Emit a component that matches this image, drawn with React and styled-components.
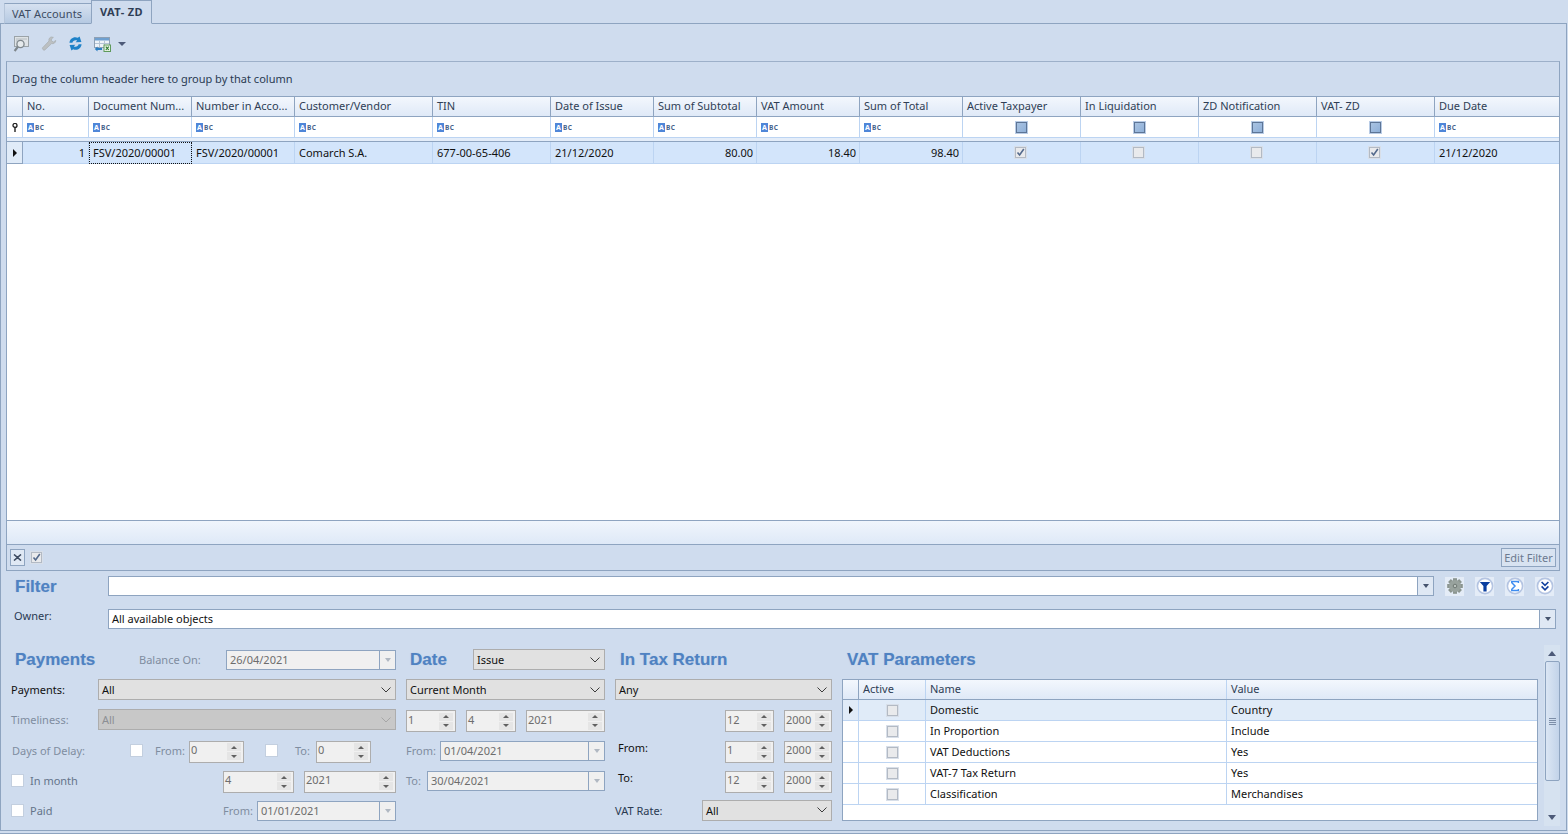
import React from "react";
import styled, { createGlobalStyle } from "styled-components";

const columns = [
  { title: "No.", width: 66 },
  { title: "Document Num...", width: 103 },
  { title: "Number in Acco...", width: 103 },
  { title: "Customer/Vendor", width: 138 },
  { title: "TIN", width: 118 },
  { title: "Date of Issue", width: 103 },
  { title: "Sum of Subtotal", width: 103 },
  { title: "VAT Amount", width: 103 },
  { title: "Sum of Total", width: 103 },
  { title: "Active Taxpayer", width: 118, check: true },
  { title: "In Liquidation", width: 118, check: true },
  { title: "ZD Notification", width: 118, check: true },
  { title: "VAT- ZD", width: 118, check: true },
  { title: "Due Date", width: 125 },
];

const row = [
  { text: "1", right: true },
  { text: "FSV/2020/00001", focus: true },
  { text: "FSV/2020/00001" },
  { text: "Comarch S.A." },
  { text: "677-00-65-406" },
  { text: "21/12/2020" },
  { text: "80.00", right: true },
  { text: "18.40", right: true },
  { text: "98.40", right: true },
  { check: true },
  { check: false },
  { check: false },
  { check: true },
  { text: "21/12/2020" },
];

const vatRows = [
  ["Domestic", "Country"],
  ["In Proportion", "Include"],
  ["VAT Deductions", "Yes"],
  ["VAT-7 Tax Return", "Yes"],
  ["Classification", "Merchandises"],
];

export default function App() {
  return (
    <Page>
      <GlobalStyle />
      <Tabs>
        <Tab>VAT Accounts</Tab>
        <Tab $active>VAT- ZD</Tab>
      </Tabs>
      <Panel>
        <Toolbar>
          <ToolIcon><PreviewIcon /></ToolIcon>
          <ToolIcon><WrenchIcon /></ToolIcon>
          <ToolIcon $width={26}><RefreshIcon /></ToolIcon>
          <ToolIcon $width={23}><ExportIcon /></ToolIcon>
          <Caret />
        </Toolbar>

        <GridBox>
          <GroupBar>Drag the column header here to group by that column</GroupBar>
          <GridRow $height={20}>
            <IndicatorCell $header />
            {columns.map((c) => (
              <HeadCell key={c.title} $width={c.width}>{c.title}</HeadCell>
            ))}
          </GridRow>
          <GridRow $height={21} $white>
            <IndicatorCell $filter><KeyIcon /></IndicatorCell>
            {columns.map((c) => (
              <FilterCell key={c.title} $width={c.width} $center={c.check}>
                {c.check ? <FilterCheck /> : <AbcIcon />}
              </FilterCell>
            ))}
          </GridRow>
          <RowGap />
          <DataRow>
            <IndicatorCell $row><RowArrow /></IndicatorCell>
            {row.map((cell, i) => (
              <DataCell
                key={i}
                $width={columns[i].width}
                $right={cell.right}
                $focus={cell.focus}
                $center={cell.check !== undefined}
              >
                {cell.check !== undefined ? <GridCheck $on={cell.check} /> : cell.text}
              </DataCell>
            ))}
          </DataRow>
          <GridBody />
          <SummaryStrip />
          <FilterStrip>
            <CloseBox>
              <svg width="9" height="7" viewBox="0 0 9 7">
                <path d="M1 0.5 L4.5 3.5 L1 6.5 M8 0.5 L4.5 3.5 L8 6.5" fill="none" stroke="#3d4a60" strokeWidth="1.6" />
              </svg>
            </CloseBox>
            <GridCheck $on $strip />
            <EditFilter>Edit Filter</EditFilter>
          </FilterStrip>
        </GridBox>

        <FilterSection>
          <FilterLine>
            <FilterHeading>Filter</FilterHeading>
            <TextField>
              <FieldButton />
            </TextField>
            <RoundIcons>
              <IconTile><GearIcon /></IconTile>
              <IconTile><FunnelIcon /></IconTile>
              <IconTile><SigmaIcon /></IconTile>
              <IconTile><ChevronsIcon /></IconTile>
            </RoundIcons>
          </FilterLine>
          <OwnerLine>
            <OwnerLabel>Owner:</OwnerLabel>
            <TextField>
              <FieldText>All available objects</FieldText>
              <FieldButton />
            </TextField>
          </OwnerLine>
        </FilterSection>

        <Form>
          <PaymentsColumn>
            <FormRow>
              <Heading $width={128}>Payments</Heading>
              <Label $width={87} $muted>Balance On:</Label>
              <DateField $width={170} value="26/04/2021" />
            </FormRow>
            <FormRow>
              <Label $width={87} $dark>Payments:</Label>
              <Select $grow>All</Select>
            </FormRow>
            <FormRow>
              <Label $width={87} $muted>Timeliness:</Label>
              <Select $grow $disabled>All</Select>
            </FormRow>
            <FormRow>
              <Label $width={119} $muted $pad={1}>Days of Delay:</Label>
              <CheckBox />
              <Label $width={46} $muted $pad={12}>From:</Label>
              <Spin $width={55} value="0" />
              <Spacer $width={21} />
              <CheckBox />
              <Label $width={38} $muted $pad={17}>To:</Label>
              <Spin $width={55} value="0" />
            </FormRow>
            <FormRow>
              <CheckBox />
              <Label $width={199} $soft $pad={6}>In month</Label>
              <Spin $width={71} value="4" />
              <Spacer $width={10} />
              <Spin $width={92} value="2021" />
            </FormRow>
            <FormRow>
              <CheckBox />
              <Label $width={199} $soft $pad={6}>Paid</Label>
              <Label $width={34} $muted>From:</Label>
              <DateField $width={139} value="01/01/2021" />
            </FormRow>
          </PaymentsColumn>

          <DateColumn>
            <FormRow>
              <Heading $width={67} $pad={4}>Date</Heading>
              <Select $grow>Issue</Select>
            </FormRow>
            <FormRow>
              <Select $grow>Current Month</Select>
            </FormRow>
            <FormRow>
              <Spin $width={50} value="1" />
              <Spacer $width={10} />
              <Spin $width={50} value="4" />
              <Spacer $width={10} />
              <Spin $width={79} value="2021" />
            </FormRow>
            <FormRow>
              <Label $width={34} $muted>From:</Label>
              <DateField $width={165} value="01/04/2021" />
            </FormRow>
            <FormRow>
              <Label $width={21} $muted>To:</Label>
              <DateField $width={178} value="30/04/2021" />
            </FormRow>
          </DateColumn>

          <TaxColumn>
            <FormRow>
              <Heading $pad={5}>In Tax Return</Heading>
            </FormRow>
            <FormRow>
              <Select $grow>Any</Select>
            </FormRow>
            <FormRow>
              <Spacer $width={110} />
              <Spin $width={49} value="12" />
              <Spacer $width={10} />
              <Spin $width={48} value="2000" />
            </FormRow>
            <FormRow>
              <Label $width={110} $dark $pad={3} $raised>From:</Label>
              <Spin $width={49} value="1" />
              <Spacer $width={10} />
              <Spin $width={48} value="2000" />
            </FormRow>
            <FormRow>
              <Label $width={110} $dark $pad={3} $raised>To:</Label>
              <Spin $width={49} value="12" />
              <Spacer $width={10} />
              <Spin $width={48} value="2000" />
            </FormRow>
            <FormRow>
              <Label $width={87}>VAT Rate:</Label>
              <Select $grow>All</Select>
            </FormRow>
          </TaxColumn>

          <VatColumn>
            <FormRow>
              <Heading $pad={5}>VAT Parameters</Heading>
            </FormRow>
            <VatTable>
              <VatRow $head>
                <VatIndicator $head />
                <VatCell $width={67}>Active</VatCell>
                <VatCell $width={301}>Name</VatCell>
                <VatCell $grow>Value</VatCell>
              </VatRow>
              {vatRows.map(([name, value], i) => (
                <VatRow key={name} $selected={i === 0}>
                  <VatIndicator>{i === 0 && <RowArrow />}</VatIndicator>
                  <VatCell $width={67} $center><GridCheck /></VatCell>
                  <VatCell $width={301}>{name}</VatCell>
                  <VatCell $grow>{value}</VatCell>
                </VatRow>
              ))}
            </VatTable>
          </VatColumn>

          <ScrollBar>
            <ScrollUp />
            <ScrollThumb>
              <Grip />
            </ScrollThumb>
            <ScrollDown />
          </ScrollBar>
        </Form>
      </Panel>
    </Page>
  );
}

function Select({ children, $grow, $disabled }) {
  return (
    <SelectBox $grow={$grow} $disabled={$disabled}>
      <span>{children}</span>
      <svg width="10" height="6" viewBox="0 0 10 6">
        <path d="M0.5 0.5 L5 5 L9.5 0.5" fill="none" stroke={$disabled ? "#a6a6a6" : "#3c3c3c"} strokeWidth="1" />
      </svg>
    </SelectBox>
  );
}

function DateField({ $width, value }) {
  return (
    <DateBox $width={$width}>
      <DateValue>{value}</DateValue>
      <DateButton>
        <CaretSmall />
      </DateButton>
    </DateBox>
  );
}

function Spin({ $width, value }) {
  return (
    <SpinBox $width={$width}>
      <SpinValue>{value}</SpinValue>
      <SpinButtons>
        <SpinButton><SpinUp /></SpinButton>
        <SpinButton><SpinDown /></SpinButton>
      </SpinButtons>
    </SpinBox>
  );
}

function AbcIcon() {
  return (
    <Abc>
      <AbcA>A</AbcA>
      <AbcRest>BC</AbcRest>
    </Abc>
  );
}

function PreviewIcon() {
  return (
    <svg width="16" height="16" viewBox="0 0 16 16">
      <rect x="1.5" y="0.5" width="14" height="10" fill="#dfe3e6" stroke="#9ba3a8" />
      <path d="M3 3h11M3 5h4" stroke="#b5bcc0" />
      <circle cx="7.5" cy="8" r="3.6" fill="#e6eaec" stroke="#7f878c" strokeWidth="1.3" />
      <path d="M5 10.6 L1.6 15" stroke="#7f878c" strokeWidth="2.2" />
    </svg>
  );
}

function WrenchIcon() {
  return (
    <svg width="16" height="16" viewBox="0 0 16 16">
      <path d="M10.5 1 C8.6 1.2 7.4 3 8 5 L1.5 11.8 C0.8 12.8 2.6 14.8 3.8 14 L10.6 7.6 C12.8 8.2 14.8 6.6 14.8 4.4 L12.4 6 L10.4 4.8 L10.4 3 L12.4 1.4 Z" fill="#bcc0c2" stroke="#a2a7aa" strokeWidth="0.6" />
    </svg>
  );
}

function RefreshIcon() {
  return (
    <svg width="15" height="15" viewBox="0 0 15 15">
      <path d="M1.4 6.8 C1.8 2.6 6 0 9.8 1.8 L11.6 0.4 L13.4 6 L7.6 6.2 L9.2 4.6 C6.8 3.6 4.8 5 4.4 6.8 Z" fill="#1f82c8" />
      <path d="M13.6 8.2 C13.2 12.4 9 15 5.2 13.2 L3.4 14.6 L1.6 9 L7.4 8.8 L5.8 10.4 C8.2 11.4 10.2 10 10.6 8.2 Z" fill="#1f82c8" />
    </svg>
  );
}

function ExportIcon() {
  return (
    <svg width="17" height="16" viewBox="0 0 17 16">
      <rect x="0.5" y="1.5" width="15" height="10" fill="#eef3f8" stroke="#8ea0b4" />
      <rect x="1" y="2" width="14" height="2.5" fill="#6fa0d0" />
      <path d="M5.5 4.5v7M10.5 4.5v7M1 7.5h14" stroke="#b5c4d4" />
      <rect x="10" y="9" width="6.5" height="6.5" fill="#e8f3e4" stroke="#5f9a5b" />
      <path d="M11.8 10.6 L14.8 14 M14.8 10.6 L11.8 14" stroke="#2f7d32" strokeWidth="1.1" />
      <path d="M8 12 H3.5 V10.5 L0.8 13 L3.5 15.4 V14 H8 Z" fill="#2b7fc2" />
    </svg>
  );
}

function KeyIcon() {
  return (
    <svg width="6" height="9" viewBox="0 0 6 9">
      <circle cx="3" cy="2.4" r="2" fill="none" stroke="#222" strokeWidth="1.3" />
      <path d="M3 4v5" stroke="#222" strokeWidth="1.4" />
    </svg>
  );
}

function GearIcon() {
  const teeth = [0, 45, 90, 135];
  return (
    <svg width="16" height="16" viewBox="0 0 16 16">
      {teeth.map((a) => (
        <rect key={a} x="6" y="0.2" width="4" height="15.6" fill="#8b9590" transform={`rotate(${a} 8 8)`} />
      ))}
      <circle cx="8" cy="8" r="6" fill="#98a29d" />
      <circle cx="8" cy="8" r="1.8" fill="#b9c2bd" stroke="#6e7873" />
    </svg>
  );
}

function FunnelIcon() {
  return (
    <svg width="18" height="18" viewBox="0 0 18 18">
      <circle cx="9" cy="9" r="7.6" fill="#fff" stroke="#b4c4e2" strokeWidth="1.6" />
      <path d="M3.8 5 H14.2 L10.6 9 V14.6 H7.4 V9 Z" fill="#0b3f9f" />
    </svg>
  );
}

function SigmaIcon() {
  return (
    <svg width="18" height="18" viewBox="0 0 18 18">
      <circle cx="9" cy="9" r="7.6" fill="#fff" stroke="#b4c4e2" strokeWidth="1.6" />
      <path d="M12.4 6 V4.6 H5.8 V5.8 L9 9 L5.8 12.2 V13.4 H12.4 V12" fill="none" stroke="#3d8cf0" strokeWidth="1.5" />
    </svg>
  );
}

function ChevronsIcon() {
  return (
    <svg width="18" height="18" viewBox="0 0 18 18">
      <circle cx="9" cy="9" r="7.6" fill="#fff" stroke="#b4c4e2" strokeWidth="1.6" />
      <path d="M5.6 5 L9 8.4 L12.4 5 M5.6 9.4 L9 12.8 L12.4 9.4" fill="none" stroke="#12409e" strokeWidth="1.6" />
    </svg>
  );
}

const GlobalStyle = createGlobalStyle`
  html, body {
    margin: 0;
    height: 100%;
    overflow: hidden;
  }
  body {
    background: #cfdcee;
    font-family: "Noto Sans", "DejaVu Sans", sans-serif;
    font-size: 11px;
    color: #1b1b1b;
  }
`;

const Page = styled.div`
  width: 1568px;
  height: 834px;
  display: flex;
  flex-direction: column;
  box-sizing: border-box;
  padding-bottom: 2px;
  border-bottom: 1px solid #8ea4c0;
`;

const Tabs = styled.div`
  display: flex;
  align-items: flex-end;
  height: 24px;
  padding-left: 4px;
  margin-bottom: -1px;
  position: relative;
  z-index: 1;
`;

const Tab = styled.div`
  box-sizing: border-box;
  border: 1px solid #8ea4c0;
  border-bottom: ${(p) => (p.$active ? "1px solid #cfdcee" : "1px solid #8ea4c0")};
  border-left: ${(p) => (p.$active ? "1px solid #8ea4c0" : "1px solid #b5c5da")};
  border-right: ${(p) => (p.$active ? "1px solid #8ea4c0" : "0")};
  height: ${(p) => (p.$active ? "24px" : "21px")};
  width: ${(p) => (p.$active ? "61px" : "87px")};
  padding-left: ${(p) => (p.$active ? "8px" : "7px")};
  line-height: ${(p) => (p.$active ? "21px" : "19px")};
  letter-spacing: ${(p) => (p.$active ? "0.4px" : "0.15px")};
  font-weight: ${(p) => (p.$active ? 700 : 400)};
  color: ${(p) => (p.$active ? "#2f3e55" : "#3d4c63")};
  background: ${(p) => (p.$active ? "#cfdcee" : "linear-gradient(#d6e1f0, #b5c9e2)")};
  white-space: nowrap;
`;

const Panel = styled.div`
  flex: 1;
  min-height: 0;
  display: flex;
  flex-direction: column;
  box-sizing: border-box;
  border: 1px solid #8ea4c0;
  margin-right: 1px;
  padding: 0 5px;
`;

const Toolbar = styled.div`
  display: flex;
  align-items: center;
  box-sizing: border-box;
  height: 37px;
  flex: none;
  padding: 3px 0 0 7px;
`;

const ToolIcon = styled.div`
  width: ${(p) => p.$width ?? 27.5}px;
  height: 16px;
  display: flex;
`;

const Caret = styled.div`
  width: 0;
  height: 0;
  margin-left: 1px;
  border-left: 4px solid transparent;
  border-right: 4px solid transparent;
  border-top: 4px solid #4d5a78;
`;

const GridBox = styled.div`
  flex: 1;
  min-height: 0;
  display: flex;
  flex-direction: column;
  box-sizing: border-box;
  border: 1px solid #8ea4c0;
  border-top-color: #9db0c9;
  margin-right: 1px;
`;

const GroupBar = styled.div`
  height: 34px;
  flex: none;
  line-height: 33px;
  padding-left: 5px;
  color: #2a3a52;
  background: #cfdcee;
  border-bottom: 1px solid #8ea4c0;
`;

const GridRow = styled.div`
  display: flex;
  flex: none;
  height: ${(p) => p.$height}px;
  background: ${(p) => (p.$white ? "#fff" : "transparent")};
`;

const IndicatorCell = styled.div`
  width: 16px;
  flex: none;
  box-sizing: border-box;
  display: flex;
  align-items: center;
  justify-content: center;
  border-right: 1px solid ${(p) => (p.$filter ? "#bcd4f2" : "#8ea4c0")};
  border-bottom: 1px solid ${(p) => (p.$filter ? "#bcd4f2" : "#8ea4c0")};
  background: ${(p) =>
    p.$header ? "linear-gradient(#f3f7fd, #dfe9f7)" : p.$row ? "#e0ebf8" : "#fff"};
`;

const HeadCell = styled.div`
  width: ${(p) => p.$width}px;
  flex: none;
  box-sizing: border-box;
  padding-left: 4px;
  line-height: 18px;
  color: #2f3e55;
  white-space: nowrap;
  overflow: hidden;
  border-right: 1px solid #8ea4c0;
  border-bottom: 1px solid #8ea4c0;
  background: linear-gradient(#f3f7fd, #dfe9f7);
  &:last-child {
    flex: 1;
    border-right: 0;
  }
`;

const FilterCell = styled.div`
  width: ${(p) => p.$width}px;
  flex: none;
  box-sizing: border-box;
  display: flex;
  align-items: center;
  justify-content: ${(p) => (p.$center ? "center" : "flex-start")};
  padding: ${(p) => (p.$center ? "0 1px 0 0" : "0 0 0 4px")};
  border-right: 1px solid #bcd4f2;
  border-bottom: 1px solid #bcd4f2;
  &:last-child {
    flex: 1;
    border-right: 0;
  }
`;

const Abc = styled.span`
  display: inline-flex;
  align-items: center;
  gap: 1px;
  height: 9px;
`;

const AbcA = styled.span`
  width: 7px;
  height: 9px;
  background: #4f86d8;
  color: #fff;
  font-size: 7px;
  line-height: 9px;
  text-align: center;
  font-weight: 700;
`;

const AbcRest = styled.span`
  color: #46628c;
  font-size: 6.5px;
  font-weight: 700;
  letter-spacing: 0.5px;
`;

const FilterCheck = styled.div`
  width: 11px;
  height: 11px;
  box-sizing: border-box;
  background: linear-gradient(135deg, #a9c3e2, #8fb0d8);
  border: 1px solid #5d7596;
  outline: 1px solid #b9cce6;
`;

const RowGap = styled.div`
  height: 3px;
  flex: none;
  background: #e4edf9;
  border-bottom: 1px solid #8ea4c0;
`;

const DataRow = styled.div`
  display: flex;
  flex: none;
  height: 22px;
  background: #d3e5fb;
`;

const RowArrow = styled.div`
  width: 0;
  height: 0;
  border-top: 4px solid transparent;
  border-bottom: 4px solid transparent;
  border-left: 4px solid #111;
`;

const DataCell = styled.div`
  width: ${(p) => p.$width}px;
  flex: none;
  box-sizing: border-box;
  display: flex;
  align-items: center;
  justify-content: ${(p) => (p.$center ? "center" : p.$right ? "flex-end" : "flex-start")};
  padding: ${(p) => (p.$center ? "0 2px 0 0" : "0 3px 0 4px")};
  white-space: nowrap;
  color: #111;
  border-right: 1px solid #bcd4f2;
  border-bottom: 1px solid #bcd4f2;
  outline: ${(p) => (p.$focus ? "1px dotted #111" : "none")};
  outline-offset: -1px;
  &:last-child {
    flex: 1;
    border-right: 0;
  }
`;

const GridCheck = styled.div`
  width: 11px;
  height: 11px;
  box-sizing: border-box;
  flex: none;
  margin-left: ${(p) => (p.$strip ? "6px" : "0")};
  background-color: #e9eaec;
  border: 1px solid #b3bac4;
  outline: 1px solid #d8dfe9;
  background-repeat: no-repeat;
  background-position: center;
  background-image: ${(p) =>
    p.$on
      ? `url("data:image/svg+xml,%3Csvg xmlns='http://www.w3.org/2000/svg' width='9' height='9'%3E%3Cpath d='M1.5 4.5 L3.6 7 L7.8 1' fill='none' stroke='%23546a8c' stroke-width='1.6'/%3E%3C/svg%3E")`
      : "none"};
`;

const GridBody = styled.div`
  flex: 1;
  min-height: 0;
  background: #fff;
  border-bottom: 1px solid #8ea4c0;
`;

const SummaryStrip = styled.div`
  height: 23px;
  flex: none;
  background: linear-gradient(#f0f5fc, #dee9f7);
  border-bottom: 1px solid #8ea4c0;
`;

const FilterStrip = styled.div`
  height: 25px;
  flex: none;
  display: flex;
  align-items: center;
  padding: 0 3px;
`;

const CloseBox = styled.div`
  width: 15px;
  height: 17px;
  box-sizing: border-box;
  display: flex;
  align-items: center;
  justify-content: center;
  background: #dfe8f4;
  border: 1px solid #8ea4c0;
`;

const EditFilter = styled.div`
  margin-left: auto;
  width: 55px;
  height: 19px;
  box-sizing: border-box;
  border: 1px solid #8ea4c0;
  color: #6c7a90;
  text-align: center;
  line-height: 18px;
  background: #d8e3f1;
`;

const FilterSection = styled.div`
  flex: none;
  display: flex;
  flex-direction: column;
  padding: 5px 5px 0 0;
`;

const FilterLine = styled.div`
  display: flex;
  align-items: center;
  height: 20px;
`;

const OwnerLine = styled.div`
  display: flex;
  align-items: center;
  height: 20px;
  margin-top: 13px;
`;

const FilterHeading = styled.div`
  width: 102px;
  flex: none;
  padding: 1px 0 0 9px;
  box-sizing: border-box;
  font-family: "Liberation Sans", sans-serif;
  font-size: 17px;
  font-weight: 700;
  color: #4f82c2;
  text-shadow: 0 0 1px rgba(79, 130, 194, 0.35);
`;

const OwnerLabel = styled.div`
  width: 102px;
  flex: none;
  box-sizing: border-box;
  padding: 0 0 7px 8px;
  color: #2a3a52;
`;

const TextField = styled.div`
  flex: 1;
  height: 20px;
  box-sizing: border-box;
  display: flex;
  align-items: center;
  background: #fff;
  border: 1px solid #8ea4c0;
`;

const FieldText = styled.div`
  flex: 1;
  padding: 0 0 1px 3px;
  color: #111;
`;

const FieldButton = styled.div`
  width: 16px;
  height: 100%;
  margin-left: auto;
  box-sizing: border-box;
  display: flex;
  align-items: center;
  justify-content: center;
  border-left: 1px solid #8ea4c0;
  background: #dfe8f4;
  &::after {
    content: "";
    border-left: 3.5px solid transparent;
    border-right: 3.5px solid transparent;
    border-top: 4px solid #46546e;
  }
`;

const RoundIcons = styled.div`
  display: flex;
  align-items: center;
  gap: 11px;
  padding: 0 2px 0 11px;
`;

const IconTile = styled.div`
  width: 19px;
  height: 19px;
  display: flex;
  align-items: center;
  justify-content: center;
  background: #e4ecf7;
`;

const Form = styled.div`
  flex: none;
  height: 201px;
  box-sizing: border-box;
  display: flex;
  padding: 21px 0 0 5px;
`;

const Column = styled.div`
  display: flex;
  flex-direction: column;
  gap: 10.2px;
  flex: none;
`;

const PaymentsColumn = styled(Column)`
  width: 385px;
`;

const DateColumn = styled(Column)`
  width: 199px;
  margin-left: 10px;
`;

const TaxColumn = styled(Column)`
  width: 217px;
  margin-left: 10px;
`;

const VatColumn = styled(Column)`
  width: 696px;
  margin-left: 10px;
`;

const FormRow = styled.div`
  display: flex;
  align-items: flex-start;
  height: 20px;
`;

const Heading = styled.div`
  flex: none;
  width: ${(p) => (p.$width ? `${p.$width}px` : "auto")};
  box-sizing: border-box;
  padding-left: ${(p) => p.$pad ?? 4}px;
  font-family: "Liberation Sans", sans-serif;
  font-size: 17px;
  line-height: 19px;
  font-weight: 700;
  color: #4f82c2;
  text-shadow: 0 0 1px rgba(79, 130, 194, 0.35);
`;

const Label = styled.div`
  flex: none;
  width: ${(p) => p.$width}px;
  box-sizing: border-box;
  padding-left: ${(p) => p.$pad ?? 0}px;
  line-height: ${(p) => (p.$raised ? "13px" : "20px")};
  white-space: nowrap;
  color: ${(p) => (p.$muted ? "#7f8da0" : p.$soft ? "#65748a" : p.$dark ? "#111" : "#2a3a52")};
`;

const Spacer = styled.div`
  flex: none;
  width: ${(p) => p.$width}px;
`;

const CheckBox = styled.div`
  width: 13px;
  height: 13px;
  flex: none;
  margin-top: 3px;
  background: #fff;
  border: 1px solid #c3cfdf;
  box-sizing: border-box;
`;

const SelectBox = styled.div`
  flex: ${(p) => (p.$grow ? 1 : "none")};
  height: 21px;
  margin-top: -1px;
  box-sizing: border-box;
  display: flex;
  align-items: center;
  justify-content: space-between;
  padding: 0 4px 0 3px;
  color: ${(p) => (p.$disabled ? "#8c8f94" : "#111")};
  background: ${(p) => (p.$disabled ? "#c8c8c8" : "#e1e1e1")};
  border: 1px solid #adadad;
`;

const DateBox = styled.div`
  flex: none;
  width: ${(p) => p.$width}px;
  height: 20px;
  box-sizing: border-box;
  display: flex;
  align-items: stretch;
  background: #f0f0f0;
  border: 1px solid #8ea4c0;
`;

const DateValue = styled.div`
  flex: 1;
  padding-left: 3px;
  line-height: 17px;
  color: #6d6d6d;
`;

const DateButton = styled.div`
  width: 15px;
  flex: none;
  display: flex;
  align-items: center;
  justify-content: center;
  border-left: 1px solid #8ea4c0;
`;

const CaretSmall = styled.div`
  border-left: 3.5px solid transparent;
  border-right: 3.5px solid transparent;
  border-top: 4px solid #b0b8c2;
`;

const SpinBox = styled.div`
  flex: none;
  width: ${(p) => p.$width}px;
  height: 22px;
  box-sizing: border-box;
  display: flex;
  align-items: center;
  background: #f0f0f0;
  border: 1px solid #adadad;
`;

const SpinValue = styled.div`
  flex: 1;
  padding: 0 0 4px 1px;
  color: #6d6d6d;
`;

const SpinButtons = styled.div`
  width: 14px;
  flex: none;
  display: flex;
  flex-direction: column;
  gap: 1px;
  margin-right: 2px;
`;

const SpinButton = styled.div`
  height: 8px;
  display: flex;
  align-items: center;
  justify-content: center;
  background: #e5e5e5;
`;

const SpinUp = styled.div`
  border-left: 3px solid transparent;
  border-right: 3px solid transparent;
  border-bottom: 3px solid #606060;
`;

const SpinDown = styled.div`
  border-left: 3px solid transparent;
  border-right: 3px solid transparent;
  border-top: 3px solid #606060;
`;

const VatTable = styled.div`
  height: 142px;
  box-sizing: border-box;
  background: #fff;
  border: 1px solid #8ea4c0;
  margin-top: -1px;
`;

const VatRow = styled.div`
  display: flex;
  height: ${(p) => (p.$head ? "20px" : "21px")};
  box-sizing: border-box;
  background: ${(p) =>
    p.$head ? "linear-gradient(#f3f7fd, #dfe9f7)" : p.$selected ? "#e0ebf8" : "#fff"};
  border-bottom: 1px solid ${(p) => (p.$head ? "#8ea4c0" : "#bcd4f2")};
  color: ${(p) => (p.$head ? "#2f3e55" : "#111")};
`;

const VatIndicator = styled.div`
  width: 16px;
  flex: none;
  box-sizing: border-box;
  display: flex;
  align-items: center;
  justify-content: center;
  border-right: 1px solid ${(p) => (p.$head ? "#8ea4c0" : "#bcd4f2")};
`;

const VatCell = styled.div`
  flex: ${(p) => (p.$grow ? 1 : "none")};
  width: ${(p) => (p.$width ? `${p.$width}px` : "auto")};
  box-sizing: border-box;
  display: flex;
  align-items: center;
  justify-content: ${(p) => (p.$center ? "center" : "flex-start")};
  padding: ${(p) => (p.$center ? "0" : "0 0 2px 4px")};
  border-right: 1px solid #bcd4f2;
  &:last-child {
    border-right: 0;
  }
`;

const ScrollBar = styled.div`
  width: 16px;
  height: 181px;
  flex: none;
  margin: -5px 0 0 6px;
  box-sizing: border-box;
  display: flex;
  flex-direction: column;
  align-items: center;
  background: #d6e2f0;
  padding-top: 6px;
`;

const ScrollUp = styled.div`
  border-left: 4.5px solid transparent;
  border-right: 4.5px solid transparent;
  border-bottom: 5px solid #4d5a78;
`;

const ScrollThumb = styled.div`
  width: 15px;
  height: 120px;
  margin-top: 5px;
  box-sizing: border-box;
  display: flex;
  align-items: center;
  justify-content: center;
  border: 1px solid #8ea4c0;
  border-radius: 2px;
  background: linear-gradient(90deg, #dbe6f4, #c2d3e9);
`;

const Grip = styled.div`
  width: 7px;
  height: 7px;
  background: repeating-linear-gradient(#7d8ea8 0 1px, transparent 1px 2px);
`;

const ScrollDown = styled.div`
  margin-top: auto;
  margin-bottom: 6px;
  border-left: 4.5px solid transparent;
  border-right: 4.5px solid transparent;
  border-top: 5px solid #4d5a78;
`;
